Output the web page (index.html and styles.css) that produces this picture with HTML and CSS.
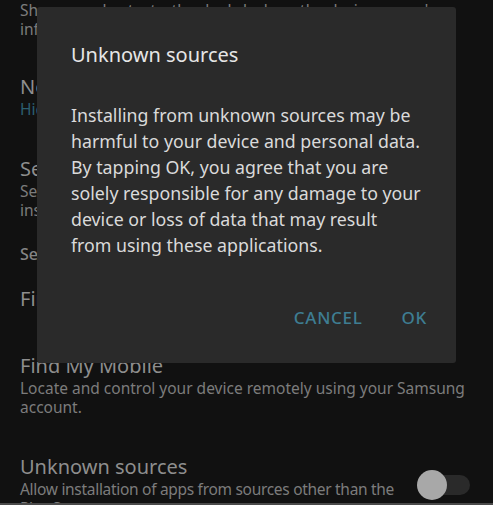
FILE: index.html
```html
<!DOCTYPE html>
<html lang="en">
<head>
<meta charset="utf-8">
<title>Lock screen and security</title>
<link rel="stylesheet" href="styles.css">
</head>
<body>
<div class="screen">
  <div class="list">
    <div class="item first">
      <div class="sub">Show app shortcuts, the dual clock, or the device owner's information.</div>
    </div>
    <div class="item">
      <div class="title">Notifications on lock screen</div>
      <div class="sub accent">Hide content</div>
    </div>
    <div class="item">
      <div class="title">Secure lock settings</div>
      <div class="sub">Set your secure lock functions, such as Auto lock and Lock instantly with Power key.</div>
    </div>
    <div class="header">Security</div>
    <div class="item tall">
      <div class="title">Fingerprints</div>
    </div>
    <div class="item">
      <div class="title">Find My Mobile</div>
      <div class="sub">Locate and control your device remotely using your Samsung account.</div>
    </div>
    <div class="item row">
      <div class="text">
        <div class="title">Unknown sources</div>
        <div class="sub tight">Allow installation of apps from sources other than the Play Store.</div>
      </div>
      <div class="switch"><span class="knob"></span></div>
    </div>
  </div>
  <div class="navbar"></div>

  <div class="dialog">
    <div class="dlg-title">Unknown sources</div>
    <div class="dlg-body">Installing from unknown sources may be<br>harmful to your device and personal data.<br>By tapping OK, you agree that you are<br>solely responsible for any damage to your<br>device or loss of data that may result<br>from using these applications.</div>
    <div class="dlg-actions">
      <span class="btn">CANCEL</span>
      <span class="btn">OK</span>
    </div>
  </div>
</div>
</body>
</html>
```

FILE: styles.css
```css
html, body {
  margin: 0;
  padding: 0;
  background: #111111;
}
body {
  font-family: "Noto Sans", "Open Sans", sans-serif;
  width: 493px;
  height: 505px;
  overflow: hidden;
}
.screen {
  position: relative;
  width: 493px;
  height: 505px;
  display: flex;
  flex-direction: column;
  overflow: hidden;
}
.list {
  flex: 1;
  overflow: hidden;
  padding-top: 1px;
}
.item {
  padding: 19px 20px 19px 20px;
}
.item.first {
  padding-top: 0;
  padding-bottom: 17px;
}
.item.tall {
  padding-bottom: 24px;
}
.title {
  font-size: 20px;
  line-height: 24px;
  color: #8e8e8e;
}
.sub {
  font-size: 15.5px;
  line-height: 19px;
  color: #7c7c7c;
  margin-top: 1px;
}
.sub.tight {
  letter-spacing: -0.3px;
}
.item.first .sub { margin-top: 0; }
.sub.accent {
  color: #2c5f70;
}
.header {
  padding: 6px 20px 4px;
  font-size: 16px;
  line-height: 19px;
  font-weight: 500;
  color: #858585;
}
.row {
  display: flex;
  align-items: center;
  gap: 16px;
}
.row .text {
  flex: 1;
  min-width: 0;
}
.switch {
  position: relative;
  width: 38px;
  height: 20px;
  border-radius: 10px;
  background: #2a2a2a;
  flex: none;
  margin-right: 3px;
  margin-bottom: 3px;
}
.knob {
  position: absolute;
  left: -15px;
  top: -5px;
  width: 30px;
  height: 30px;
  border-radius: 50%;
  background: #a8a8a8;
}
.navbar {
  height: 2px;
  background: #4a4a4a;
  flex: none;
}
.dialog {
  position: absolute;
  left: 37px;
  top: 7px;
  width: 419px;
  height: 356px;
  box-sizing: border-box;
  background: #2a2a2a;
  border-radius: 3px;
  padding: 36px 34px 0 34px;
  display: flex;
  flex-direction: column;
}
.dlg-title {
  font-size: 20px;
  line-height: 24px;
  color: #e6e6e6;
}
.dlg-body {
  margin-top: 35px;
  margin-right: -12px;
  font-size: 17.75px;
  line-height: 26px;
  color: #dadada;
  white-space: nowrap;
}
.dlg-actions {
  display: flex;
  justify-content: flex-end;
  gap: 39px;
  margin-top: 50px;
  margin-right: -5px;
}
.btn {
  font-size: 17px;
  line-height: 20px;
  font-weight: 500;
  letter-spacing: 0.7px;
  color: #3e7d92;
}
```
